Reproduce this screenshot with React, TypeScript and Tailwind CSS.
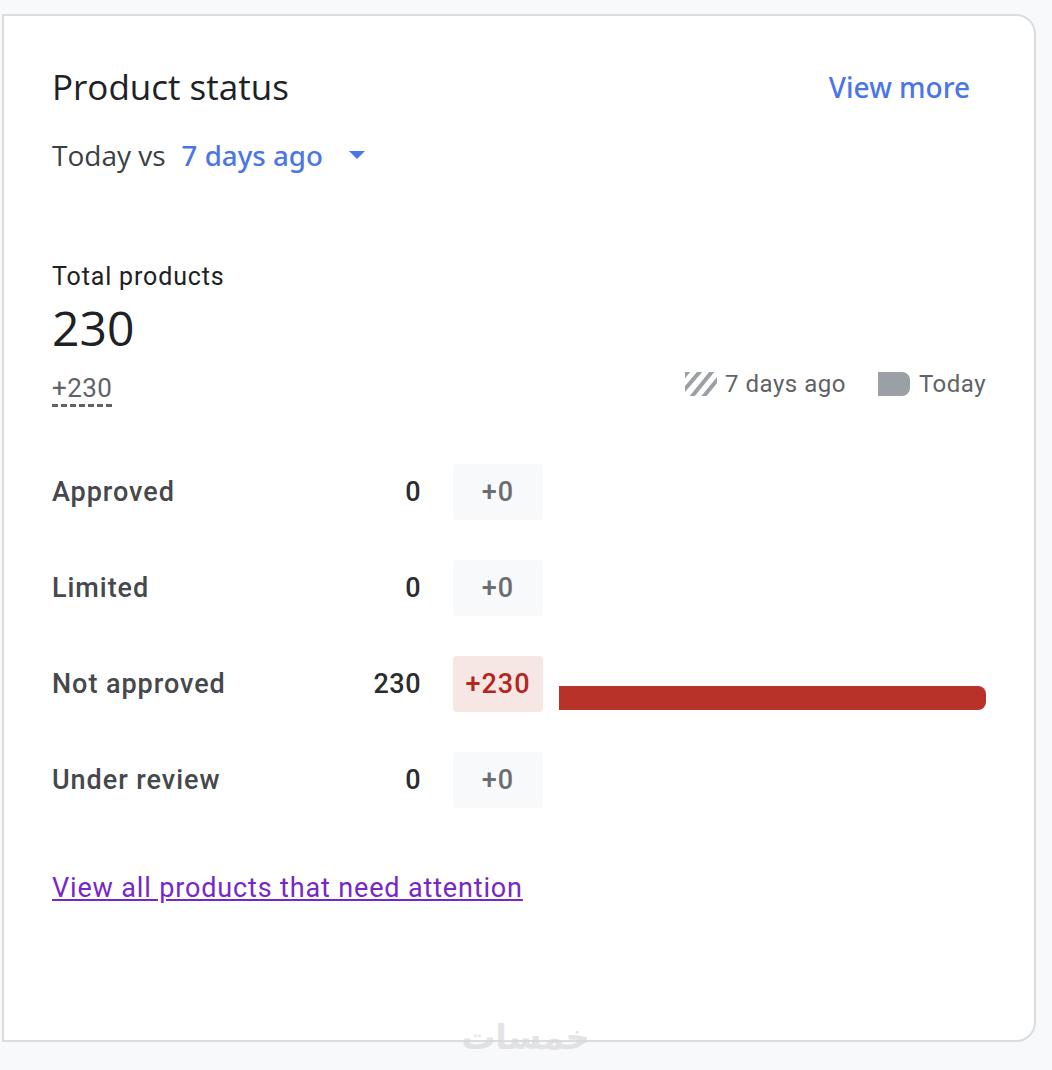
const rows = [
  { label: 'Approved', value: '0', delta: '+0' },
  { label: 'Limited', value: '0', delta: '+0' },
  { label: 'Not approved', value: '230', delta: '+230', bad: true },
  { label: 'Under review', value: '0', delta: '+0' },
];

export default function App() {
  return (
    <div className="relative h-[1070px] overflow-hidden bg-[#f8f9fb] pt-[14px] pl-[2px] font-['Roboto',sans-serif]">
      <div className="h-[1028px] w-[1034px] rounded-r-[20px] border-2 border-[#dadce0] bg-white pt-[49px] pr-[48px] pl-[48px]">
        {/* Header */}
        <div className="flex items-center justify-between">
          <h2 className="font-['Open_Sans',sans-serif] text-[35px] leading-[44px] text-[#202124]">Product status</h2>
          <a className="mr-[16px] font-['Noto_Sans',sans-serif] text-[28px] leading-[40px] font-medium text-[#4a76e8]">View more</a>
        </div>
        <div className="mt-[26px] flex items-center font-['Open_Sans',sans-serif] text-[28px] leading-[40px]">
          <span className="text-[#3c4043]">Today vs</span>
          <span className="ml-[16px] font-['Noto_Sans',sans-serif] text-[27.7px] font-medium text-[#4a76e8]">7 days ago</span>
          <span className="ml-[26px] h-0 w-0 border-x-[8px] border-t-[8px] border-x-transparent border-t-[#4a76e8]" />
        </div>

        {/* Total */}
        <div className="mt-[84px] flex items-end justify-between">
          <div>
            <div className="text-[25px] leading-[36px] tracking-[0.85px] text-[#202124]">Total products</div>
            <div className="mt-[3px] font-['Open_Sans',sans-serif] text-[48px] leading-[60px] text-[#202124]">230</div>
            <div className="mt-[14px] inline-block border-b-[3px] border-dashed border-[#5f6368] text-[26px] leading-[32px] tracking-[0.4px] text-[#5f6368]">+230</div>
          </div>
          <div className="mb-[5px] flex items-center text-[24px] leading-[36px] tracking-[0.5px] text-[#5f6368]">
            <svg width="32" height="24" viewBox="0 0 32 24" className="mr-[8px]">
              <defs>
                <clipPath id="swatch">
                  <rect width="32" height="24" />
                </clipPath>
              </defs>
              <g clipPath="url(#swatch)" stroke="#9aa0a6" strokeWidth="4">
                <path d="M-6 24 18 -4M4 28 30 -4M14 30 42 -4M-14 20 6 -4" />
              </g>
            </svg>
            <span>7 days ago</span>
            <span className="mr-[9px] ml-[32px] h-[24px] w-[32px] rounded-r-[8px] bg-[#9aa0a6]" />
            <span>Today</span>
          </div>
        </div>

        {/* Rows */}
        <div className="mt-[57px] flex flex-col gap-[40px]">
          {rows.map((row) => (
            <div key={row.label} className="flex h-[56px] items-center text-[27px]">
              <div className="w-[300px] font-medium tracking-[0.95px] text-[#45484c]">{row.label}</div>
              <div className="w-[69px] text-right font-medium tracking-[0.5px] text-[#2b2c2f]">{row.value}</div>
              <div
                className={
                  row.bad
                    ? 'ml-[32px] flex h-[56px] w-[90px] items-center justify-center rounded-[4px] bg-[#f6e6e4] font-medium tracking-[1px] text-[#b3261e]'
                    : 'ml-[32px] flex h-[56px] w-[90px] items-center justify-center rounded-[4px] bg-[#f8f9fa] font-medium tracking-[1px] text-[#6a6e73]'
                }
              >
                {row.delta}
              </div>
              {row.bad && <div className="mt-[28px] ml-[16px] h-[24px] w-[427px] rounded-r-[8px] bg-[#b93229]" />}
            </div>
          ))}
        </div>

        <a className="mt-[58px] inline-block text-[27px] leading-[44px] tracking-[0.85px] text-[#7627c9] underline">
          View all products that need attention
        </a>
      </div>

      {/* Watermark */}
      <div
        dir="rtl"
        className="absolute top-[1012px] left-[462px] w-[128px] text-right font-['DejaVu_Sans',sans-serif] text-[34px] leading-[50px] font-bold whitespace-nowrap text-[#d9d9d9] opacity-70"
      >
        خمسات
      </div>
    </div>
  );
}
